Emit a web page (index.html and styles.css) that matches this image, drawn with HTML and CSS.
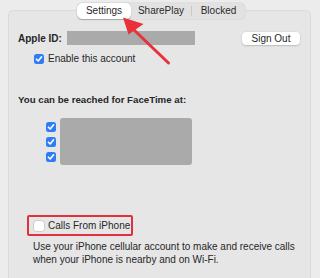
FILE: index.html
```html
<!DOCTYPE html>
<html>
<head>
<meta charset="utf-8">
<link rel="stylesheet" href="styles.css">
</head>
<body>
<div class="window">
  <div class="tabs">
    <div class="tab selected">Settings</div>
    <div class="tab">SharePlay</div>
    <div class="sep"></div>
    <div class="tab">Blocked</div>
  </div>
  <div class="panel">
    <div class="row id-row">
      <span class="label">Apple ID:</span>
      <span class="redact id-redact"></span>
      <span class="spacer"></span>
      <button class="btn">Sign Out</button>
    </div>
    <label class="check-row enable">
      <span class="cb on"><svg viewBox="0 0 10 10"><path d="M2.4 5.2 L4.2 7 L7.6 2.8" /></svg></span>
      <span>Enable this account</span>
    </label>
    <div class="heading">You can be reached for FaceTime at:</div>
    <div class="addr">
      <div class="cbs">
        <span class="cb on"><svg viewBox="0 0 10 10"><path d="M2.4 5.2 L4.2 7 L7.6 2.8" /></svg></span>
        <span class="cb on"><svg viewBox="0 0 10 10"><path d="M2.4 5.2 L4.2 7 L7.6 2.8" /></svg></span>
        <span class="cb on"><svg viewBox="0 0 10 10"><path d="M2.4 5.2 L4.2 7 L7.6 2.8" /></svg></span>
      </div>
      <span class="redact addr-redact"></span>
    </div>
    <div class="highlight">
      <label class="check-row">
        <span class="cb off"></span>
        <span>Calls From iPhone</span>
      </label>
    </div>
    <p class="desc">Use your iPhone cellular account to make and receive calls when your iPhone is nearby and on Wi-Fi.</p>
  </div>
  <svg class="arrow" width="320" height="80" viewBox="0 0 320 80">
    <path d="M168.5 63 L133 29" stroke="#e8313b" stroke-width="3" stroke-linecap="round" fill="none"/>
    <path d="M123 17.5 L143.5 24 L128.5 34.5 Z" fill="#e8313b"/>
  </svg>
</div>
</body>
</html>
```
FILE: styles.css
```css
* { box-sizing: border-box; }
html, body { margin: 0; padding: 0; }
body {
  background: #ececec;
  font-family: "Liberation Sans", Arial, sans-serif;
  font-size: 10px;
  color: #262626;
  width: 320px;
  height: 278px;
  overflow: hidden;
  white-space: nowrap;
}
.window {
  position: relative;
  padding: 3px 9px 0 8px;
}
.tabs {
  position: relative;
  z-index: 2;
  display: flex;
  align-items: center;
  width: 168px;
  height: 16px;
  margin-left: 69px;
  background: #e2e2e2;
  border-radius: 5px;
  box-shadow: 0 0 0 0.5px #d4d4d4;
}
.tab {
  height: 16px;
  line-height: 16px;
  font-size: 10px;
  color: #2a2a2a;
  text-align: center;
}
.tab.selected {
  background: #fff;
  border-radius: 5px;
  width: 54px;
  box-shadow: 0 0.5px 1px rgba(0,0,0,0.25);
}
.tab:nth-child(2) { width: 60px; }
.tab:nth-child(4) { flex: 1; }
.sep { width: 1px; height: 10px; background: #c8c8c8; }
.panel {
  margin-top: -9px;
  background: #e6e6e6;
  border: 1px solid #dadada;
  border-radius: 5px;
  height: 280px;
  padding: 20px 9px 0 9px;
}
.row { display: flex; align-items: center; }
.id-row { height: 14px; }
.label { font-weight: bold; font-size: 10px; width: 49px; }
.redact { background: #aaaaaa; display: block; }
.id-redact { width: 128px; height: 14px; }
.spacer { flex: 1; }
.btn {
  font-family: inherit;
  font-size: 10px;
  color: #262626;
  background: #fff;
  border: none;
  border-radius: 4px;
  box-shadow: 0 0.5px 1.5px rgba(0,0,0,0.3);
  width: 58px;
  height: 13px;
  padding: 0;
  line-height: 13px;
  margin-right: 1px;
}
.check-row { display: flex; align-items: center; gap: 4px; font-size: 10px; }
.enable { margin: 8px 0 0 16px; }
.cb {
  width: 10px;
  height: 10px;
  border-radius: 2.5px;
  display: block;
  flex: none;
}
.cb.on { background: #2f7df6; }
.cb.on svg { display: block; width: 10px; height: 10px; }
.cb.on path { stroke: #fff; stroke-width: 1.6; fill: none; stroke-linecap: round; stroke-linejoin: round; }
.cb.off { background: #fff; box-shadow: 0 0 0 0.5px #b5b5b5; }
.heading { font-weight: bold; font-size: 9.7px; margin-top: 30px; }
.addr { display: flex; align-items: center; margin: 13px 0 0 28px; }
.cbs { display: flex; flex-direction: column; gap: 5px; }
.addr-redact { width: 132px; height: 47px; margin-left: 4px; border-radius: 3px; }
.highlight {
  margin: 50px 0 0 9px;
  width: 106px;
  height: 21px;
  border: 2px solid #e0313c;
  border-radius: 2px;
  padding-left: 5px;
  display: flex;
  align-items: center;
}
.desc {
  margin: 4px 0 0 15px;
  font-size: 10px;
  line-height: 13px;
  white-space: normal;
  width: 275px;
}
.arrow {
  position: absolute;
  left: 0;
  top: 0;
  z-index: 3;
  pointer-events: none;
}
```
